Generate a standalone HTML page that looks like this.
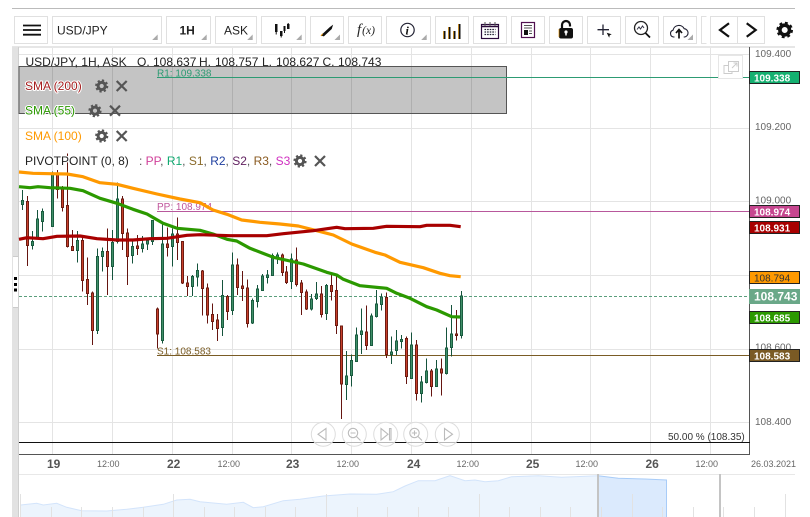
<!DOCTYPE html>
<html><head><meta charset="utf-8"><style>
html,body{margin:0;padding:0;background:#fff;width:810px;height:517px;overflow:hidden}
svg{display:block}
text{font-family:"Liberation Sans",sans-serif;white-space:pre}
.p{font-size:10px;fill:#666}
.t{font-size:9px;fill:#666}
.d{font-size:12px;font-weight:bold;fill:#555}
.l{font-size:10px;font-weight:bold;fill:#fff}
.h{font-size:12px;paint-order:stroke;stroke:#fff;stroke-width:2px;stroke-linejoin:round}
.b{fill:#fff;stroke:#e0e0e0}
</style></head><body>
<svg width="810" height="517" viewBox="0 0 810 517" xmlns="http://www.w3.org/2000/svg">
<defs>
<g id="gs"><circle r="3.6" fill="none" stroke="#555" stroke-width="3"/><circle r="5.6" fill="none" stroke="#555" stroke-width="2" stroke-dasharray="2.2 2.2"/></g>
<path id="xs" d="M-5-5L5 5M5-5L-5 5" stroke="#555" stroke-width="2.2" fill="none"/>
<path id="tr" d="M0 0h-5.5v0L0-5.5z" fill="#aaa"/>
</defs>
<!-- top rule and toolbar -->
<rect x="12" y="8" width="783" height="1" fill="#bbb"/>
<rect x="12" y="46" width="783" height="2" fill="#e6e6e6"/>
<g>
<rect class="b" x="14.5" y="16.5" width="33" height="27"/>
<rect class="b" x="52.5" y="16.5" width="109" height="27"/>
<rect class="b" x="166.5" y="16.5" width="44" height="27"/>
<rect class="b" x="215.5" y="16.5" width="41" height="27"/>
<rect class="b" x="261.5" y="16.5" width="44" height="27"/>
<rect class="b" x="310.5" y="16.5" width="33" height="27"/>
<rect class="b" x="348.5" y="16.5" width="33" height="27"/>
<rect class="b" x="386.5" y="16.5" width="44" height="27"/>
<rect class="b" x="435.5" y="16.5" width="33" height="27"/>
<rect class="b" x="473.5" y="16.5" width="33" height="27"/>
<rect class="b" x="511.5" y="16.5" width="33" height="27"/>
<rect class="b" x="549.5" y="16.5" width="33" height="27"/>
<rect class="b" x="587.5" y="16.5" width="33" height="27"/>
<rect class="b" x="625.5" y="16.5" width="33" height="27"/>
<rect class="b" x="663.5" y="16.5" width="33" height="27"/>
<path d="M706.5 16.5h-5v27h5" fill="#fff" stroke="#e0e0e0"/>
<rect class="b" x="710.5" y="16.5" width="27" height="27"/>
<rect class="b" x="737.5" y="16.5" width="27" height="27"/>
</g>
<use href="#tr" x="157.7" y="40"/><use href="#tr" x="206.7" y="40"/><use href="#tr" x="252.7" y="40"/><use href="#tr" x="301.7" y="40"/><use href="#tr" x="340" y="40"/><use href="#tr" x="426.7" y="40"/><use href="#tr" x="693" y="40"/>
<path d="M23 25.5h18M23 30h18M23 34.7h18" stroke="#111" stroke-width="1.8"/>
<text x="57" y="34.3" font-size="12" fill="#222">USD/JPY</text>
<text x="179.5" y="34.3" font-size="12" font-weight="bold" fill="#222">1H</text>
<text x="224" y="34.3" font-size="12" fill="#222">ASK</text>
<!-- candle icon -->
<path d="M275 24h2.500v8h-2.500zM280 31h2.500v5h-2.500zM283.500 26h2v5h-2zM287 24h2.500v5h-2.500z" fill="#111"/>
<path d="M276.200 32v2.500M281.200 36v1.500M284.500 31v2M288.200 23v1" stroke="#111"/>
<path d="M322 35.200l8-7.500 2-1.500-.8 2.500-7.500 7z" fill="#111" stroke="#111" stroke-width="1.200"/>
<path d="M321 36l1.800-2.300" stroke="#d98a00"/>
<text x="357" y="34" style="font-family:'Liberation Serif',serif;font-style:italic" fill="#222"><tspan font-size="15">f</tspan><tspan font-size="11.500" dx="1">(x)</tspan></text>
<circle cx="407.500" cy="30" r="6.700" fill="none" stroke="#223" stroke-width="1.200"/>
<text x="405.500" y="34.500" font-size="12" font-style="italic" font-weight="bold" style="font-family:'Liberation Serif',serif" fill="#111">i</text>
<path d="M444.500 39V31M449.500 39V27M454.500 39V31M459.500 39V24" stroke="#111" stroke-width="2"/>
<path d="M443.500 39V31M448.500 39V27M453.500 39V31M458.500 39V24" stroke="#d98a00" stroke-width=".7"/>
<rect x="481.500" y="24.500" width="17" height="14" fill="#fff" stroke="#2a0a3a" stroke-width="1.200"/>
<path d="M481 26.500h18" stroke="#2a0a3a" stroke-width="1.500"/>
<path d="M485 22v4M490 22v4M495 22v4" stroke="#555"/>
<path d="M484.500 29.500h11M484.500 32h11M484.500 34.500h11" stroke="#223" stroke-width="1.300" stroke-dasharray="1.600 1"/>
<rect x="521.500" y="22.500" width="13" height="15" fill="#fff" stroke="#501050" stroke-width="1.200"/>
<path d="M524 25.500h8M524 28h8M529 31h3M529 33.500h3" stroke="#555"/>
<rect x="524" y="30" width="4" height="5" fill="#111"/>
<path d="M562 29v-4a4 4 0 0 1 8 0v1.500" fill="none" stroke="#111" stroke-width="2.200"/>
<rect x="559" y="28" width="14" height="10.500" rx="2" fill="#111"/>
<path d="M559 29v8" stroke="#d98a00" stroke-width=".7"/>
<circle cx="566" cy="32" r="1.600" fill="#fff"/><path d="M566 32.500v3" stroke="#fff" stroke-width="1.500"/>
<path d="M603 24.500v10.500M597.500 29.700h11.500" stroke="#223" stroke-width="1.300"/>
<path d="M606.700 32.700l5 1.500-2 1-.5 2.500z" fill="#111"/>
<circle cx="641" cy="28" r="6.500" fill="#fff" stroke="#222" stroke-width="1.300"/>
<path d="M637 29.500l2-2.500 1.500 2 2-3 1.500 2" fill="none" stroke="#334" stroke-width="1"/>
<path d="M645.500 33l4.500 4.500" stroke="#111" stroke-width="1.800"/>
<path d="M674.500 37h-1a3.500 3.500 0 0 1-.5-6.800 6 6 0 0 1 11.200-1.500 4.200 4.200 0 0 1 .5 8.300h-1" fill="none" stroke="#223" stroke-width="1.100"/>
<path d="M679 38.500v-8M676 33l3-3.500 3 3.500" fill="none" stroke="#111" stroke-width="1.700"/>
<path d="M729 23.300L720 30l9 6.700M746.700 23.300L755.700 30l-9 6.700" fill="none" stroke="#111" stroke-width="2.200"/>
<g transform="translate(784.700 30)"><circle r="4.800" fill="none" stroke="#111" stroke-width="3.600"/><circle r="7" fill="none" stroke="#111" stroke-width="2.600" stroke-dasharray="2.800 2.700"/></g>
<!-- left strip -->
<rect x="12" y="47" width="6" height="470" fill="#e2e2e2"/>
<rect x="13" y="257" width="5" height="50" fill="#fff"/>
<path d="M13 256.500h5M13 307.500h5" stroke="#ccc"/>
<rect x="18" y="47" width="1" height="470" fill="#cfcfcf"/>
<path d="M14 277h3v3h-3zM14 283h3v3h-3zM14 288.500h3v3h-3z" fill="#000"/>
<!-- grid -->
<path d="M52.500 48V454M112.500 48V454M172.500 48V454M232.500 48V454M291.500 48V454M351.500 48V454M411.500 48V454M471.500 48V454M531.500 48V454M590.500 48V454M650.500 48V454M710.500 48V454M19 54.500H750M19 128.500H750M19 201.500H750M19 275.500H750M19 349.500H750M19 422.500H750" stroke="#e4e4e4" fill="none"/>
<!-- gray box -->
<rect x="19" y="66.500" width="487.500" height="47" fill="rgba(0,0,0,.23)" stroke="#555"/>
<!-- frame -->
<path d="M749.500 47V454.500H19" fill="none" stroke="#555"/>
<!-- levels -->
<path d="M157 77.500H749" stroke="#2d9b73"/>
<path d="M157 211.500H749" stroke="#b8589c"/>
<path d="M157 355.500H749" stroke="#7a5c25"/>
<path d="M19 296.500H749" stroke="#5a9e7c" stroke-dasharray="3 2"/>
<path d="M19 442.500H750" stroke="#111"/>
<text x="157" y="76.300" font-size="10" fill="#2d9b73">R1: 109.338</text>
<text x="157" y="210" font-size="10" fill="#c0559b">PP: 108.974</text>
<text x="157" y="354.700" font-size="10" fill="#7a5c25">S1: 108.583</text>
<text x="668" y="440" font-size="10" fill="#333">50.00 % (108.35)</text>
<!-- candles -->
<g fill="none" stroke-width="3" shape-rendering="crispEdges" transform="translate(.1667 160) scale(.33333)">
<path stroke="#15533c" d="M67 90V150M97 213V268M112 150V235M127 145V215M157 35V200M232 213V308M292 265V522M307 262V335M337 210V360M352 68V250M397 238V310M427 228V278M442 235V270M457 180V255M487 190V550M517 205V320M577 345V408M592 310V380M667 360V528"/>
<path stroke="#651510" d="M82 108V318M172 30V115M187 78V155M202 -20V262M217 210V272M247 230V395M262 293V435M277 395V555M322 205V405M367 108V270M382 205V375M412 225V285M472 443V565M502 203V290M532 172V300M547 243V372M562 348V408M607 330V467M622 370V490M637 430V510M652 462V543M682 405V480"/>
<path stroke="#1a5c40" fill="#3f8f68" d="M64 122h6V134h-6zM94 245h6V257h-6zM109 177h6V232h-6zM124 155h6V184h-6zM154 42h6V199h-6zM229 242h6V271h-6zM289 290h6V512h-6zM304 275h6V289h-6zM334 247h6V319h-6zM349 117h6V244h-6zM394 260h6V286h-6zM424 252h6V265h-6zM439 242h6V252h-6zM454 182h6V244h-6zM484 252h6V541h-6zM514 222h6V259h-6zM574 350h6V379h-6zM589 332h6V351h-6zM664 407h6V502h-6z"/>
<path stroke="#6d1c12" fill="#c8402c" d="M79 125h6V257h-6zM169 42h6V89h-6zM184 82h6V142h-6zM199 137h6V259h-6zM214 260h6V271h-6zM244 242h6V361h-6zM259 359h6V401h-6zM274 399h6V512h-6zM319 275h6V319h-6zM364 117h6V221h-6zM379 219h6V289h-6zM409 258h6V265h-6zM469 447h6V522h-6zM499 252h6V262h-6zM529 222h6V247h-6zM544 245h6V369h-6zM559 369h6V379h-6zM604 333h6V385h-6zM619 384h6V465h-6zM634 464h6V484h-6zM649 480h6V505h-6zM679 409h6V454h-6z"/>
</g>
<g fill="none" stroke-width="3" shape-rendering="crispEdges" transform="translate(230.167 220) scale(.33333)">
<path stroke="#15533c" d="M7 97V285M67 235V312M82 195V262M97 162V212M112 150V190M127 100V167M142 97V132M184 100V207M244 222V272M259 186V240M289 192V300M349 393V540M364 403V500M379 322V425M394 265V402M424 280V378M439 210V292M454 220V272M484 350V432M499 330V405M514 345V385M544 337V476M574 468V548M589 415V490M619 420V500M649 322V463M664 255V410M694 213V355"/>
<path stroke="#651510" d="M22 115V225M37 153V243M52 178V322M157 100V168M169 138V192M199 82V200M214 180V285M229 208V270M274 198V292M304 157V242M319 168V342M334 316V597M409 257V390M469 217V414M529 350V492M559 360V542M604 447V530M634 415V527M679 270V362"/>
<path stroke="#1a5c40" fill="#3f8f68" d="M4 135h6V271h-6zM64 242h6V309h-6zM79 207h6V244h-6zM94 168h6V211h-6zM109 165h6V173h-6zM124 107h6V166h-6zM139 105h6V112h-6zM181 117h6V184h-6zM241 237h6V267h-6zM256 222h6V235h-6zM286 197h6V280h-6zM346 468h6V493h-6zM361 422h6V466h-6zM376 345h6V424h-6zM391 333h6V343h-6zM421 288h6V376h-6zM436 252h6V289h-6zM451 231h6V253h-6zM481 396h6V403h-6zM496 363h6V391h-6zM511 359h6V364h-6zM541 375h6V475h-6zM571 486h6V520h-6zM586 453h6V487h-6zM616 447h6V499h-6zM646 384h6V460h-6zM661 342h6V382h-6zM691 228h6V346h-6z"/>
<path stroke="#6d1c12" fill="#c8402c" d="M19 135h6V202h-6zM34 198h6V205h-6zM49 204h6V311h-6zM154 105h6V157h-6zM166 156h6V187h-6zM196 120h6V194h-6zM211 189h6V217h-6zM226 216h6V267h-6zM271 222h6V283h-6zM301 197h6V214h-6zM316 212h6V316h-6zM331 318h6V492h-6zM406 336h6V376h-6zM466 232h6V404h-6zM526 356h6V469h-6zM556 375h6V520h-6zM601 453h6V499h-6zM631 447h6V459h-6zM676 342h6V346h-6z"/>
</g>
<!-- SMA lines -->
<g fill="none" stroke-width="3.200" stroke-linejoin="round">
<path stroke="#ff9900" d="M19 172L33 173.300 50 173.700 67 174 83 176.700 100 182.700 117 184.300 133 188.300 157 194 180 199 200 202.700 213 210 227 214.300 241.700 220 260 222.300 280 224 298.300 226 316.700 230.700 333.300 235 351.700 244 375 252.300 385 255 400 262.300 423.300 267.700 440 273.300 450 275.700 460.700 276.700"/>
<path stroke="#2b9900" d="M19 186.700L30 187.700 38 186.700 50 187.700 70 188.300 83 190.700 100 198.300 117 203.300 133 209.300 147 214 163 223.300 177 228.300 200 230.300 213 234 227 239.300 236.700 241 250 248.300 273.300 257.300 290 261 303.300 264 326.700 272.300 336.700 275 343.300 279.300 360 285.700 386.700 288.300 396.700 293.300 410 298.300 426.700 306.700 436.700 310 451.700 316.700 460 317"/>
<path stroke="#a80000" d="M19 239.300L27 237.700 43 238.700 57 236.300 80 236 97 238.700 117 240 133 240 150 238.700 167 238.300 187 235.300 200 234.700 230 235.700 266.700 235.700 283.300 233.700 313.300 230.700 336.700 227.300 345 228.700 373.300 228.300 386.700 226.300 420 226.700 426.700 225.300 450 225.300 460.700 226.700"/>
</g>
<!-- legend -->
<g font-size="12" fill="#222">
<text x="25.500" y="66">USD/JPY, 1H, ASK</text>
<text x="137" y="66">O.</text><text x="153" y="66">108.637</text>
<text x="199" y="66">H.</text><text x="215" y="66">108.757</text>
<text x="262" y="66">L.</text><text x="276" y="66">108.627</text>
<text x="322.500" y="66">C.</text><text x="338" y="66">108.743</text>
</g>
<text class="h" x="25" y="90" fill="#a51c1c">SMA (200)</text>
<use href="#gs" x="101.700" y="86"/><use href="#xs" x="121.700" y="86"/>
<text class="h" x="25" y="114.500" fill="#2b9900">SMA (55)</text>
<use href="#gs" x="95" y="110.700"/><use href="#xs" x="115" y="110.700"/>
<text class="h" x="25" y="140" fill="#ff9900">SMA (100)</text>
<use href="#gs" x="101.700" y="136"/><use href="#xs" x="121.700" y="136"/>
<text class="h" x="25" y="165" fill="#222">PIVOTPOINT (0, 8)</text>
<text x="139" y="165" font-size="12" fill="#555">: <tspan fill="#d0409a">PP</tspan>, <tspan fill="#10a870">R1</tspan>, <tspan fill="#8a6a2a">S1</tspan>, <tspan fill="#2040a0">R2</tspan>, <tspan fill="#601f5f">S2</tspan>, <tspan fill="#8a5a20">R3</tspan>, <tspan fill="#d030c0">S3</tspan></text>
<use href="#gs" x="300" y="161"/><use href="#xs" x="320" y="161"/>
<!-- popout -->
<rect x="718.500" y="55.500" width="24" height="23" fill="#fff" stroke="#e6e6e6"/>
<path d="M728.500 61.500h10v10h-10zM728.500 65.500h-4.500v8h8v-2" fill="none" stroke="#ccc"/>
<path d="M732 68l5-5M733.500 63h3.500v3.500" fill="none" stroke="#ccc"/>
<!-- price labels -->
<text class="p" x="755" y="57">109.400</text>
<text class="p" x="755" y="130">109.200</text>
<text class="p" x="755" y="203.500">109.000</text>
<text class="p" x="755" y="350.500">108.600</text>
<text class="p" x="755" y="425">108.400</text>
<g stroke="#222">
<rect x="749.500" y="71.500" width="50" height="12" fill="#14b070"/>
<rect x="749.500" y="205.500" width="50" height="12" fill="#c6468f"/>
<rect x="749.500" y="221.500" width="50" height="12" fill="#a80000"/>
<rect x="749.500" y="271.500" width="50" height="12" fill="#ff9900"/>
<rect x="749.500" y="311.500" width="50" height="12" fill="#2b9900"/>
<rect x="749.500" y="349.500" width="50" height="12" fill="#7a5a24"/>
</g>
<rect x="749" y="289" width="51" height="15" fill="#6aa888"/>
<text class="l" x="754" y="81.300">109.338</text>
<text class="l" x="754" y="215.300">108.974</text>
<text class="l" x="754" y="231.300">108.931</text>
<text x="754" y="281.300" font-size="10" fill="#333">108.794</text>
<text class="l" x="754" y="300.500" style="font-size:12px">108.743</text>
<text class="l" x="754" y="321.300">108.685</text>
<text class="l" x="754" y="359.300">108.583</text>
<!-- nav buttons -->
<g fill="rgba(255,255,255,.7)" stroke="#ddd">
<circle cx="323.300" cy="434.300" r="12"/><circle cx="354.300" cy="434.300" r="12"/><circle cx="385.700" cy="434.300" r="12"/><circle cx="415.700" cy="434.300" r="12"/><circle cx="447.300" cy="434.300" r="12"/>
</g>
<g fill="none" stroke="#bbb" stroke-width="1.100">
<path d="M326 428.500v11.500l-8-5.800z"/>
<circle cx="353" cy="433" r="4.700"/><path d="M356.500 436.500l4 4M350.500 433h5"/>
<path d="M381 428.500v11.500l7-5.800zM389.500 428.500h1.500v11.500h-1.500z"/>
<circle cx="414.500" cy="433" r="4.700"/><path d="M418 436.500l4 4M412 433h5M414.500 430.500v5"/>
<path d="M444.500 428.500v11.500l8-5.800z"/>
</g>
<!-- time axis -->
<text class="d" x="47" y="468">19</text>
<text class="t" x="97" y="467">12:00</text>
<text class="d" x="167" y="468">22</text>
<text class="t" x="217.500" y="467">12:00</text>
<text class="d" x="286" y="468">23</text>
<text class="t" x="336.500" y="467">12:00</text>
<text class="d" x="407" y="468">24</text>
<text class="t" x="456.500" y="467">12:00</text>
<text class="d" x="526" y="468">25</text>
<text class="t" x="575.500" y="467">12:00</text>
<text class="d" x="645.500" y="468">26</text>
<text class="t" x="695.500" y="467">12:00</text>
<text class="t" x="751" y="467">26.03.2021</text>
<!-- navigator -->
<rect x="19" y="474" width="776" height="1" fill="#e8e8e8"/>
<path d="M20.700 505L36.700 503.300 43.300 505 56.700 503.300 66.700 507.300 81.700 510.700 106.700 511 126.700 509.300 143.300 507.300 163.300 504.300 176.700 500 190 499.300 200 501.700 226.700 504.300 243.300 502.300 253.300 507.700 263.300 506.700 283.300 500.700 300 499.300 323.300 496 350 494 376.700 494.300 393.300 491.700 405 486 418.300 480.700 435 480.700 450 475.700 465 480.700 475 480 485 481.700 498.300 480.700 511.700 476.700 538.300 475.700 561.700 477.300 598 475.700V517H20.700z" fill="#ecf4fd"/>
<path d="M20.700 505L36.700 503.300 43.300 505 56.700 503.300 66.700 507.300 81.700 510.700 106.700 511 126.700 509.300 143.300 507.300 163.300 504.300 176.700 500 190 499.300 200 501.700 226.700 504.300 243.300 502.300 253.300 507.700 263.300 506.700 283.300 500.700 300 499.300 323.300 496 350 494 376.700 494.300 393.300 491.700 405 486 418.300 480.700 435 480.700 450 475.700 465 480.700 475 480 485 481.700 498.300 480.700 511.700 476.700 538.300 475.700 561.700 477.300 598 475.700" fill="none" stroke="#d3e4fb"/>
<path d="M598 475.700L618.300 478.300 645 479 666.500 480V517H598z" fill="#dbeafd"/>
<path d="M598 475.700L618.300 478.300 645 479 666.500 480V517" fill="none" stroke="#a8ccf8"/>
<path d="M20.500 494V517M173.500 494V517M326.500 494V517M479.500 494V517M632.500 494V517M785.500 494V517M51.500 507V517M81.500 507V517M112.500 507V517M143.500 507V517M204.500 507V517M234.500 507V517M265.500 507V517M295.500 507V517M357.500 507V517M387.500 507V517M418.500 507V517M448.500 507V517M509.500 507V517M540.500 507V517M570.500 507V517M601.500 507V517M662.500 507V517M693.500 507V517M723.500 507V517M754.500 507V517" stroke="#e2e2e2"/>
<path d="M598 474V517M720 474V517" stroke="#c4c4c4" stroke-width="2"/>
</svg>
</body></html>
